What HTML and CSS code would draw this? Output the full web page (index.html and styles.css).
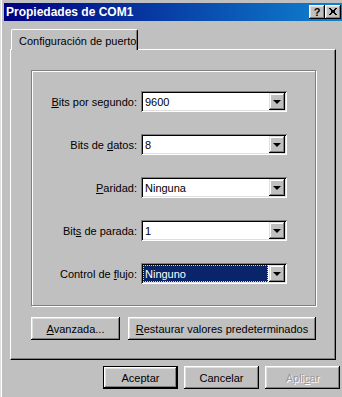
FILE: index.html
```html
<!DOCTYPE html>
<html lang="es">
<head>
  <meta charset="UTF-8" />
  <title>Propiedades de COM1</title>
  <link rel="stylesheet" href="styles.css">
</head>
<body>

  <div class="window">
    <!-- TITLE BAR -->
    <div class="titlebar">
      <span class="title">Propiedades de COM1</span>
      <div class="caption-buttons">
        <button class="cap-btn help">?</button>
        <button class="cap-btn close">
          <svg width="8" height="7" viewBox="0 0 8 7">
            <path d="M0 0h2v1H0zM1 1h2v1H1zM5 1h2v1H5zM6 0h2v1H6zM2 2h4v3H2zM0 6h2v1H0zM1 5h2v1H1zM5 5h2v1H5zM6 6h2v1H6z" fill="#000"/>
          </svg>
        </button>
      </div>
    </div>

    <!-- TABS -->
    <div class="tabs">
      <div class="tab active">Configuración de puerto</div>
    </div>

    <div class="panel">
      <div class="group">
        <label class="field-label"><u>B</u>its por segundo:</label>
        <div class="combo"><span class="combo-value">9600</span><span class="drop"></span></div>

        <label class="field-label">Bits de <u>d</u>atos:</label>
        <div class="combo"><span class="combo-value">8</span><span class="drop"></span></div>

        <label class="field-label"><u>P</u>aridad:</label>
        <div class="combo"><span class="combo-value">Ninguna</span><span class="drop"></span></div>

        <label class="field-label">Bit<u>s</u> de parada:</label>
        <div class="combo"><span class="combo-value">1</span><span class="drop"></span></div>

        <label class="field-label">Control de <u>f</u>lujo:</label>
        <div class="combo focused"><span class="combo-value">Ninguno</span><span class="drop"></span></div>
      </div>

      <div class="panel-actions">
        <button class="btn advanced"><u>A</u>vanzada...</button>
        <button class="btn restore"><u>R</u>estaurar valores predeterminados</button>
      </div>
    </div>

    <!-- OK / CANCEL / APPLY -->
    <div class="dialog-actions">
      <button class="btn default">Aceptar</button>
      <button class="btn">Cancelar</button>
      <button class="btn disabled">Apli<u>c</u>ar</button>
    </div>
  </div>

</body>
</html>
```

FILE: styles.css
```css
:root {
  --face: #c0c0c0;
  --light: #dfdfdf;
  --shadow: #808080;
  --dark: #000;
  --highlight: #0a246a;
}

html, body {
  margin: 0;
  padding: 0;
  background: var(--face);
  overflow: hidden;
}

body {
  font-family: "Liberation Sans", Arial, sans-serif;
  font-size: 11px;
  color: #000;
}

.window {
  width: 346px;
  height: 397px;
  box-sizing: border-box;
  padding: 3px 0 0 3px;
  border-left: 1px solid var(--light);
  box-shadow: inset 1px 0 #fff;
}

/* title bar */
.titlebar {
  height: 18px;
  display: flex;
  align-items: center;
  justify-content: space-between;
  padding: 0 5px 0 2px;
  background: linear-gradient(to right, #000080, #1084d0);
  color: #fff;
}

.title {
  font-weight: bold;
  font-size: 12px;
}

.caption-buttons {
  display: flex;
}

.cap-btn {
  width: 16px;
  height: 14px;
  padding: 0;
  border: none;
  background: var(--face);
  box-shadow: inset -1px -1px var(--dark), inset 1px 1px #fff,
              inset -2px -2px var(--shadow), inset 2px 2px var(--light);
  display: flex;
  align-items: center;
  justify-content: center;
  font-family: "Liberation Sans", Arial, sans-serif;
  font-weight: bold;
  font-size: 11px;
  line-height: 1;
  color: #000;
}

.cap-btn svg {
  display: block;
  margin-top: -1px;
}

/* tabs */
.tabs {
  display: flex;
  margin: 8px 0 0 7px;
  position: relative;
  z-index: 1;
}

.tab {
  height: 21px;
  width: 127px;
  box-sizing: border-box;
  padding: 5px 0 0 7px;
  background: var(--face);
  border-top: 1px solid #fff;
  border-left: 1px solid #fff;
  border-right: 1px solid var(--dark);
  box-shadow: inset -1px 0 var(--shadow);
  border-top-left-radius: 2px;
  border-top-right-radius: 2px;
  margin-bottom: -1px;
  font-size: 11px;
}

/* panel */
.panel {
  width: 326px;
  box-sizing: border-box;
  margin-left: 6px;
  padding: 20px 0 19px 20px;
  border-top: 1px solid #fff;
  border-left: 1px solid #fff;
  border-right: 1px solid var(--dark);
  border-bottom: 1px solid var(--dark);
  box-shadow: inset -1px -1px var(--shadow);
}

.group {
  width: 285px;
  box-sizing: border-box;
  padding: 20px 0 21px 0;
  border: 1px solid var(--shadow);
  box-shadow: inset 1px 1px #fff, 1px 1px #fff;
  display: grid;
  grid-template-columns: 105px 146px;
  column-gap: 4px;
  row-gap: 22px;
  align-items: center;
}

.field-label {
  text-align: right;
}

.combo {
  height: 21px;
  box-sizing: border-box;
  display: flex;
  padding: 2px;
  background: #fff;
  box-shadow: inset 1px 1px var(--shadow), inset -1px -1px #fff,
              inset 2px 2px var(--dark), inset -2px -2px var(--light);
}

.combo-value {
  flex: 1;
  display: flex;
  align-items: center;
  padding-left: 2px;
  margin-right: 1px;
}

.combo.focused .combo-value {
  background: var(--highlight);
  color: #fff;
  outline: 1px dotted #d8d890;
  outline-offset: -1px;
}

.drop {
  width: 16px;
  height: 17px;
  background: var(--face);
  box-shadow: inset -1px -1px var(--dark), inset 1px 1px var(--light),
              inset -2px -2px var(--shadow), inset 2px 2px #fff;
  position: relative;
}

.drop::after {
  content: "";
  position: absolute;
  left: 4px;
  top: 7px;
  border-left: 4px solid transparent;
  border-right: 4px solid transparent;
  border-top: 4px solid #000;
}

/* buttons */
.panel-actions {
  display: flex;
  gap: 8px;
  margin-top: 11px;
}

.btn {
  height: 23px;
  padding: 0;
  border: none;
  background: var(--face);
  box-shadow: inset -1px -1px var(--dark), inset 1px 1px #fff,
              inset -2px -2px var(--shadow), inset 2px 2px var(--light);
  font-family: "Liberation Sans", Arial, sans-serif;
  font-size: 11px;
  color: #000;
}

.advanced {
  width: 89px;
}

.restore {
  width: 188px;
}

.dialog-actions {
  display: flex;
  justify-content: flex-end;
  gap: 6px;
  margin: 6px 6px 0 0;
}

.dialog-actions .btn {
  width: 75px;
}

.btn.default {
  border: 1px solid var(--dark);
}

.btn.disabled {
  color: #9a9a9a;
  text-shadow: 1px 1px #fff;
}
```
